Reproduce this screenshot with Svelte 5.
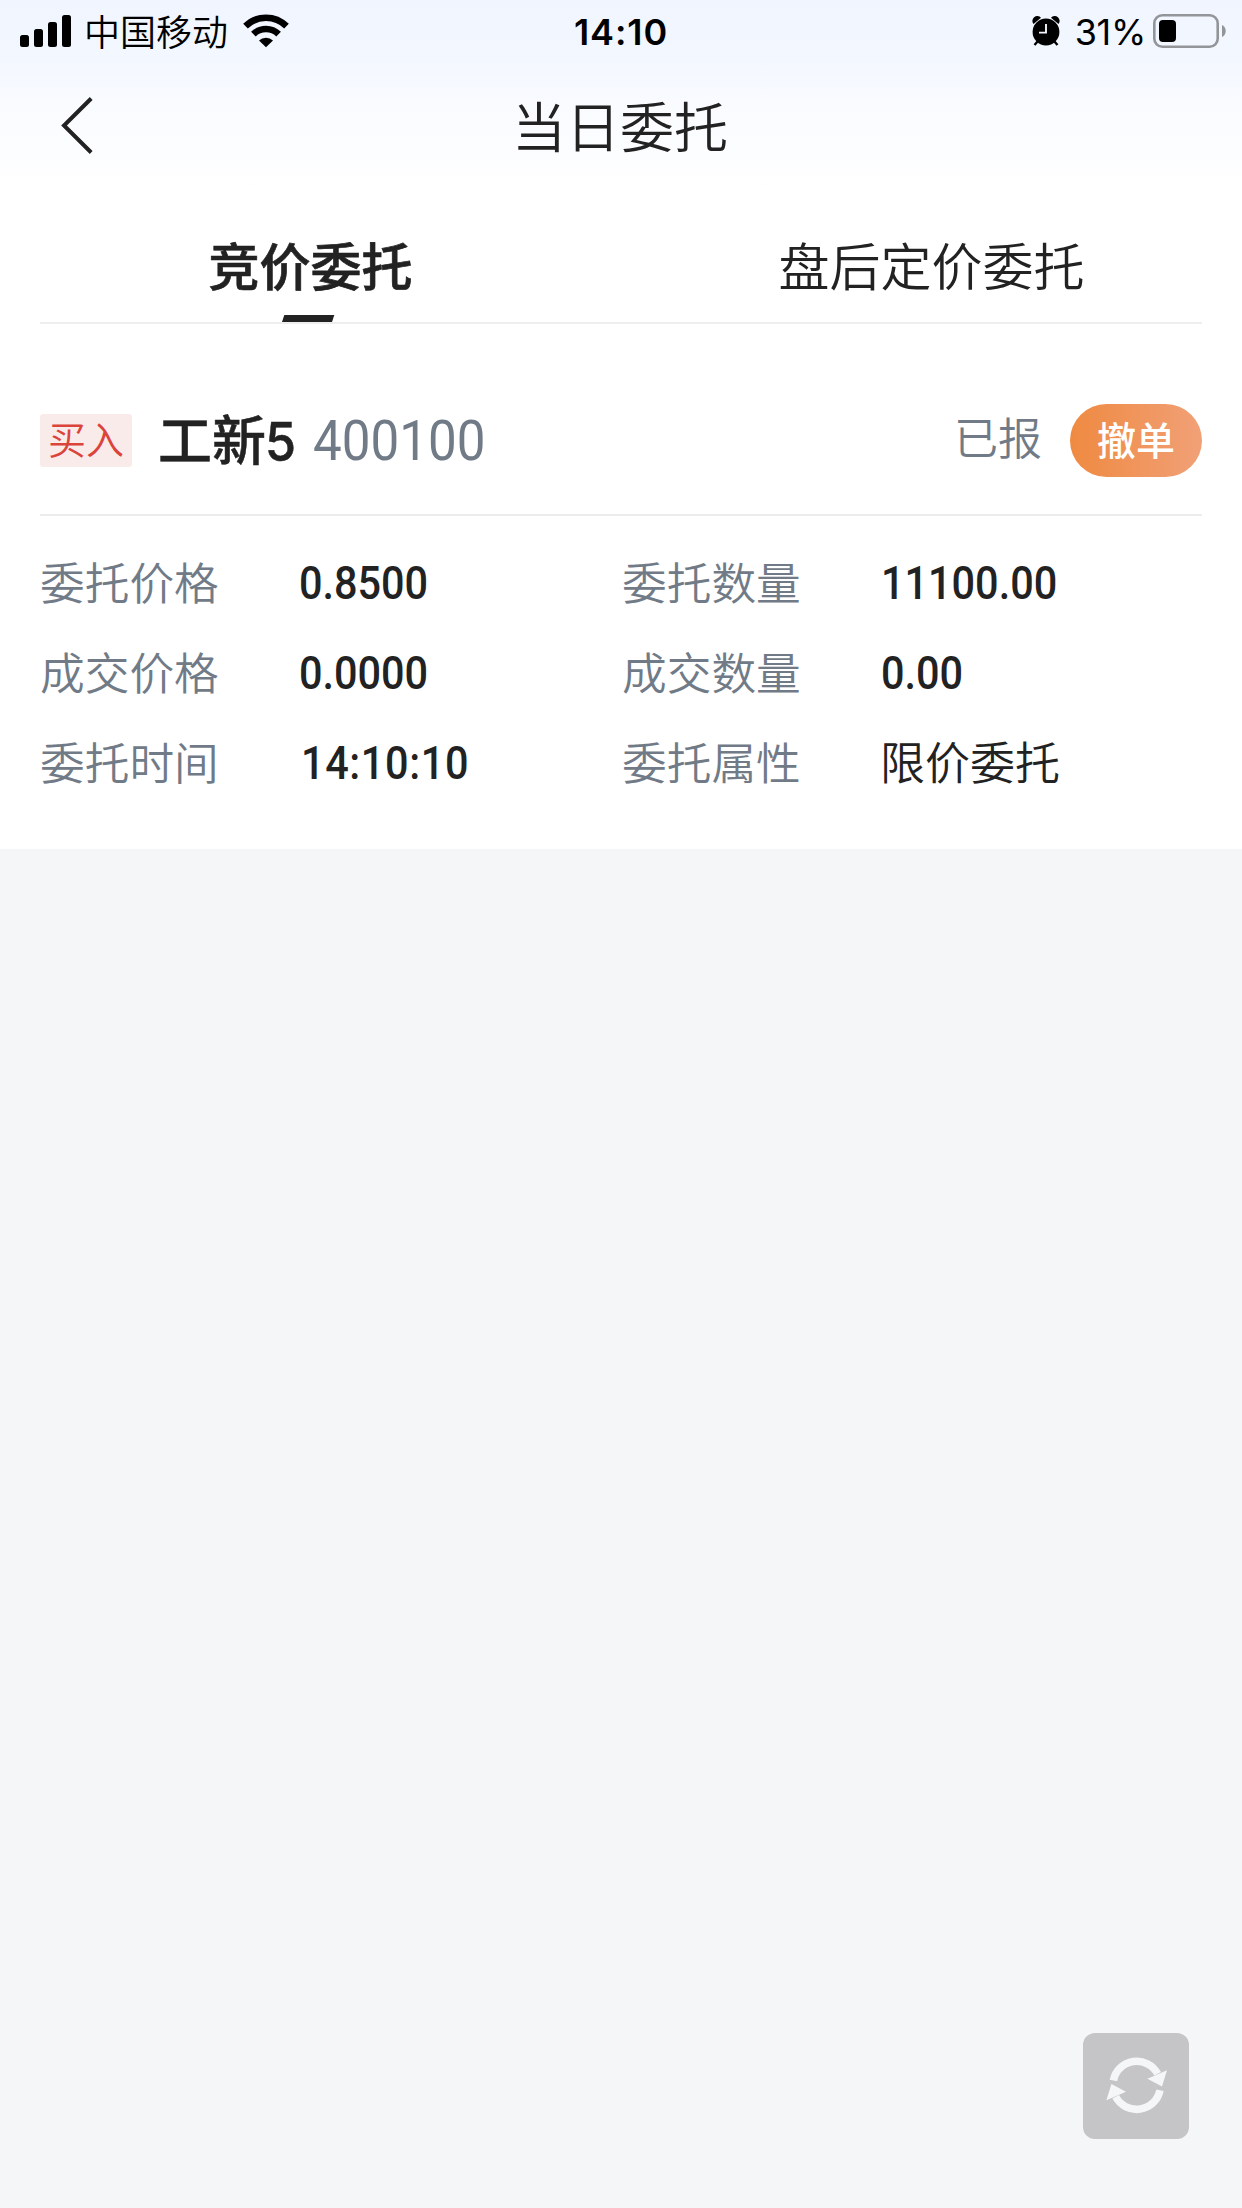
<script>
  const tabs = [
    { id: "auction", title: "竞价委托" },
    { id: "after", title: "盘后定价委托" },
  ];

  const fields = [
    { label: "委托价格", value: "0.8500" },
    { label: "委托数量", value: "11100.00" },
    { label: "成交价格", value: "0.0000" },
    { label: "成交数量", value: "0.00" },
    { label: "委托时间", value: "14:10:10", kind: "time" },
    { label: "委托属性", value: "限价委托", kind: "text" },
  ];

  let current = $state("auction");
</script>

<div class="page">
  <header class="top">
    <div class="status">
      <div class="status-left">
        <svg class="signal" width="51" height="32" viewBox="0 0 51 32">
          <rect x="0" y="20" width="9" height="12" rx="2.5" />
          <rect x="14" y="14" width="9" height="18" rx="2.5" />
          <rect x="28" y="7" width="9" height="25" rx="2.5" />
          <rect x="42" y="0" width="9" height="32" rx="2.5" />
        </svg>
        <span class="carrier">中国移动</span>
        <svg class="wifi" width="46" height="34" viewBox="0 0 46 34">
          <path d="M2.5 12.2A29 29 0 0 1 43.5 12.2" fill="none" stroke="#000" stroke-width="6.6" />
          <path d="M10.4 20.2A18 18 0 0 1 35.6 20.2" fill="none" stroke="#000" stroke-width="6.6" />
          <path d="M16 26.5A10 10 0 0 1 30 26.5L23 33.3Z" />
        </svg>
      </div>
      <span class="clock">14:10</span>
      <div class="status-right">
        <svg class="alarm" width="28" height="30" viewBox="0 0 28 30">
          <path d="M1.5 8A4.6 4.6 0 0 1 9 1.8Z" />
          <path d="M26.5 8A4.6 4.6 0 0 0 19 1.8Z" />
          <path d="M6 25L2.5 29M22 25l3.5 4" stroke="#000" stroke-width="2.4" />
          <circle cx="14" cy="16" r="13.4" />
          <path d="M14 8v8.600H7" fill="none" stroke="#f1f5fe" stroke-width="1.900" />
        </svg>
        <span class="percent">31%</span>
        <svg class="battery" width="74" height="34" viewBox="0 0 74 34">
          <rect x="1.300" y="1.300" width="63.400" height="31.400" rx="8" fill="none" stroke="#939599" stroke-width="2.600" />
          <rect x="6" y="6" width="17" height="22" rx="4" />
          <path d="M69 11c5 2 5 10 0 12z" fill="#939599" />
        </svg>
      </div>
    </div>
    <nav class="nav">
      <button class="back" aria-label="返回">
        <svg width="34" height="58" viewBox="0 0 34 58">
          <path d="M31.200 1.500L4 28.500L31.200 55.500" fill="none" stroke="#222" stroke-width="4" />
        </svg>
      </button>
      <h1>当日委托</h1>
    </nav>
  </header>

  <main>
    <div class="tabs">
      {#each tabs as tab (tab.id)}
        <button
          class="tab"
          class:active={current === tab.id}
          onclick={() => (current = tab.id)}>{tab.title}</button
        >
      {/each}
    </div>

    <section class="order">
      <div class="order-head">
        <span class="side">买入</span>
        <strong class="name">工新<b>5</b></strong>
        <span class="code">400100</span>
        <span class="state">已报</span>
        <button class="cancel">撤单</button>
      </div>
      <dl>
        {#each fields as f (f.label)}
          <div class="field">
            <dt>{f.label}</dt>
            <dd class={f.kind}>{f.value}</dd>
          </div>
        {/each}
      </dl>
    </section>
  </main>

  <button class="refresh" aria-label="刷新">
    <svg width="62" height="58" viewBox="-0.7 0.7 62 58">
      <path d="M7.700 24.100A23.800 23.800 0 0 1 52 17.500" fill="none" stroke="#f5f6f8" stroke-width="7.600" />
      <path d="M54.300 33.900A23.800 23.800 0 0 1 10 40.500" fill="none" stroke="#f5f6f8" stroke-width="7.600" />
      <path d="M41.700 22.500L61.300 14L56.300 30.200Z" fill="#f5f6f8" />
      <path d="M20.300 35.500L0.700 44L5.700 27.800Z" fill="#f5f6f8" />
    </svg>
  </button>
</div>

<style>
  :global(body) {
    margin: 0;
    background: #f4f6f8;
  }

  .page {
    min-height: 2208px;
    background: #f4f6f8;
    color: #222;
    font-family: "Noto Sans CJK SC", sans-serif;
    font-weight: 350;
  }

  button {
    padding: 0;
    border: none;
    background: none;
    color: inherit;
    font: inherit;
    cursor: pointer;
  }

  svg {
    display: block;
  }

  .top {
    height: 192px;
    background: linear-gradient(#f0f5ff, #f3f7ff 30%, #f9fbff 55%, #fcfdff 80%, #fff);
  }

  .status {
    display: grid;
    grid-template-columns: 1fr auto 1fr;
    align-items: center;
    height: 60px;
    padding: 0 15px 0 20px;
    color: #000;
  }

  .status-left,
  .status-right {
    display: flex;
    align-items: center;
  }

  .status-right {
    justify-content: flex-end;
  }

  .carrier {
    margin: 2px 14px 4px 13px;
    width: 145px;
    font-size: 36px;
    line-height: 56px;
  }

  .clock {
    margin-right: 5px;
    padding-top: 2px;
    font: 600 36px/60px Inter, sans-serif;
    letter-spacing: 0.9px;
  }

  .percent {
    margin: 1px 7px 0 15px;
    font: 400 36px/58px Inter, sans-serif;
    letter-spacing: -0.3px;
  }

  .nav {
    display: grid;
    grid-template-columns: 60px 1fr 60px;
    align-items: center;
    height: 132px;
    padding: 0 60px;
  }

  .nav h1 {
    margin: 0 2px 3px 0;
    font-size: 54px;
    font-weight: 350;
    line-height: 80px;
    text-align: center;
  }

  main {
    height: 657px;
    background: #fff;
  }

  .tabs {
    position: relative;
    display: flex;
    height: 132px;
  }

  .tabs::after {
    content: "";
    position: absolute;
    inset: auto 40px 0;
    height: 2px;
    background: #eee;
  }

  .tab {
    position: relative;
    flex: 1;
    padding-top: 12px;
    font-size: 51px;
    line-height: 76px;
  }

  .tab.active {
    font-weight: 500;
    -webkit-text-stroke: 0.7px #222;
  }

  .tab.active::after {
    content: "";
    position: absolute;
    left: 283px;
    bottom: 1px;
    width: 50px;
    height: 8px;
    background: #222;
    transform: skewX(-18deg);
  }

  .order {
    padding: 0 40px;
  }

  .order-head {
    display: flex;
    align-items: center;
    height: 148px;
    padding-top: 42px;
    border-bottom: 2px solid #ececec;
  }

  .side {
    width: 92px;
    height: 53px;
    border-radius: 3px;
    background: #faebeb;
    color: #db443b;
    font-size: 38px;
    line-height: 48px;
    text-align: center;
  }

  .name {
    margin-left: 26px;
    font-size: 54px;
    font-weight: 500;
    line-height: 80px;
    -webkit-text-stroke: 0.5px #222;
  }

  .name b {
    display: inline-block;
    width: 34px;
    margin-left: -1px;
    font-family: Inter, sans-serif;
    font-weight: 500;
    transform: scaleX(0.93);
    transform-origin: left;
  }

  .code {
    width: 186px;
    margin: 2px 0 0 14px;
    color: #717b87;
    font: 400 55px/80px Roboto, sans-serif;
    transform: scaleX(0.93);
    transform-origin: left;
  }

  .state {
    margin: 0 1px 8px auto;
    color: #717b87;
    font-size: 44px;
  }

  .cancel {
    margin-left: 27px;
    width: 132px;
    height: 73px;
    border-radius: 37px;
    background: linear-gradient(90deg, #ef8a41, #f1a077);
    color: #fff;
    font-size: 39px;
    font-weight: 500;
    line-height: 68px;
    padding-bottom: 5px;
  }

  dl {
    display: grid;
    grid-template-columns: 582px 1fr;
    margin: 22px 0 0;
  }

  .field {
    display: flex;
    align-items: center;
    height: 90px;
  }

  dt {
    width: 259px;
    margin-bottom: 6px;
    color: #717b87;
    font-size: 44.7px;
  }

  dd {
    margin: 0;
    font: 500 46px/60px Roboto, sans-serif;
    transform: scaleX(0.9);
    transform-origin: left;
  }

  dd.time {
    margin-left: 2px;
    letter-spacing: 0.7px;
  }

  dd.text {
    margin: 0 0 6px -1px;
    font: 350 45px/67px "Noto Sans CJK SC", sans-serif;
    transform: none;
  }

  .refresh {
    position: fixed;
    right: 53px;
    bottom: 69px;
    display: flex;
    align-items: center;
    justify-content: center;
    width: 106px;
    height: 106px;
    border-radius: 12px;
    background: #c5c5c7;
  }
</style>
